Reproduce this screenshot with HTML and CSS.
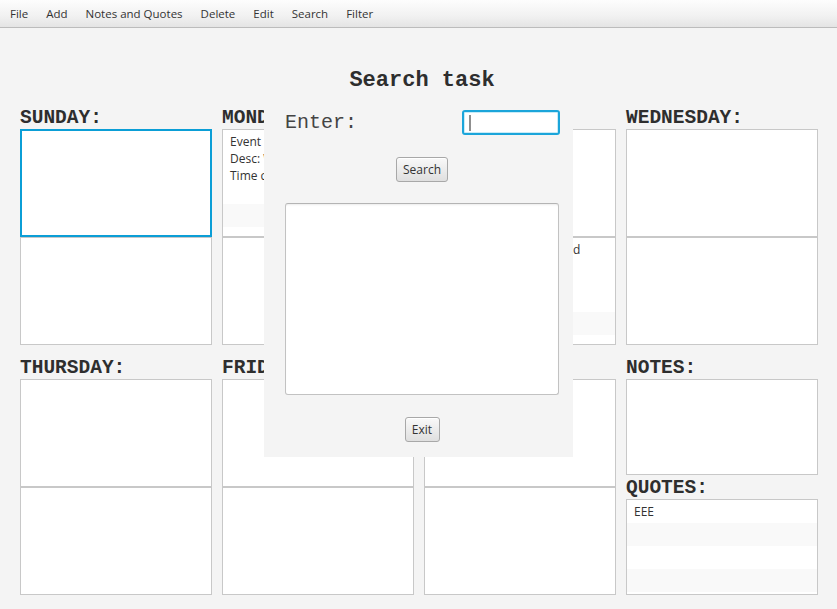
FILE: index.html
```html
<!DOCTYPE html>
<html>
<head>
<meta charset="utf-8">
<title>Planner</title>
<link rel="stylesheet" href="styles.css">
</head>
<body>
<div class="app">
  <nav class="menubar">
    <span class="menu">File</span>
    <span class="menu">Add</span>
    <span class="menu">Notes and Quotes</span>
    <span class="menu">Delete</span>
    <span class="menu">Edit</span>
    <span class="menu">Search</span>
    <span class="menu">Filter</span>
  </nav>

  <main class="board">
    <section class="day">
      <h2 class="day-label">SUNDAY:</h2>
      <div class="list list-top focused"></div>
      <div class="list"></div>
    </section>
    <section class="day">
      <h2 class="day-label">MONDAY:</h2>
      <div class="list list-top">
        <div class="cell cell-event">Event Name: Meeting<br>Desc: Weekly review<br>Time created: 10:00</div>
        <div class="cell odd"></div>
        <div class="cell"></div>
      </div>
      <div class="list"></div>
    </section>
    <section class="day">
      <h2 class="day-label">TUESDAY:</h2>
      <div class="list list-top"></div>
      <div class="list">
        <div class="cell cell-event">Event Name: Football Field<br>Desc: Training<br>Time created: 09:00</div>
        <div class="cell odd"></div>
        <div class="cell"></div>
      </div>
    </section>
    <section class="day">
      <h2 class="day-label">WEDNESDAY:</h2>
      <div class="list list-top"></div>
      <div class="list"></div>
    </section>

    <section class="day">
      <h2 class="day-label">THURSDAY:</h2>
      <div class="list list-top"></div>
      <div class="list"></div>
    </section>
    <section class="day">
      <h2 class="day-label">FRIDAY:</h2>
      <div class="list list-top"></div>
      <div class="list"></div>
    </section>
    <section class="day">
      <h2 class="day-label">SATURDAY:</h2>
      <div class="list list-top"></div>
      <div class="list"></div>
    </section>
    <section class="day side">
      <h2 class="day-label">NOTES:</h2>
      <div class="list note-box"></div>
      <h2 class="day-label quotes-label">QUOTES:</h2>
      <div class="list note-box">
        <div class="cell">EEE</div>
        <div class="cell odd"></div>
        <div class="cell"></div>
        <div class="cell odd"></div>
      </div>
    </section>
  </main>

  <div class="dialog">
    <h1 class="dialog-title">Search task</h1>
    <div class="enter-row">
      <label class="enter-label">Enter:</label>
      <div class="field"><span class="caret"></span></div>
    </div>
    <button class="btn btn-search">Search</button>
    <div class="results"></div>
    <button class="btn btn-exit">Exit</button>
  </div>
</div>
</body>
</html>
```

FILE: styles.css
```css
html, body {
  margin: 0;
  padding: 0;
  background: #f4f4f4;
}

.app {
  position: relative;
  width: 837px;
  height: 609px;
  overflow: hidden;
  font-family: "Open Sans", "Noto Sans", sans-serif;
  font-size: 12px;
  color: #333333;
}

.menubar {
  display: flex;
  align-items: center;
  height: 27px;
  padding-left: 1px;
  background: linear-gradient(to bottom, #fdfdfd 0%, #f1f1f1 60%, #e4e4e4 100%);
  border-bottom: 1px solid #bcbcbc;
  box-sizing: content-box;
}

.menu {
  padding: 0 9px;
  font-size: 11.5px;
  line-height: 27px;
  color: #333333;
}

.board {
  display: grid;
  grid-template-columns: repeat(4, 192px);
  column-gap: 10px;
  row-gap: 13px;
  padding: 80px 0 0 20px;
}

.day {
  display: flex;
  flex-direction: column;
}

.day-label {
  margin: 0 0 1px 0;
  font-family: "Liberation Mono", "Courier New", monospace;
  font-weight: bold;
  font-size: 19.5px;
  line-height: 20px;
  color: #2e2e2e;
  white-space: nowrap;
}

.quotes-label {
  margin-top: 3px;
}

.list {
  box-sizing: border-box;
  height: 108px;
  background: #ffffff;
  border: 1px solid #c8c8c8;
  overflow: hidden;
}

.list.focused {
  border: 2px solid #0b9ed6;
}

.note-box {
  height: 96px;
}

.cell {
  box-sizing: border-box;
  height: 23px;
  padding: 3px 7px;
  line-height: 17px;
  white-space: nowrap;
  overflow: hidden;
}

.cell.odd {
  background: #f9f9f9;
}

.cell-event {
  height: 74px;
}

.dialog {
  position: absolute;
  left: 264px;
  top: 40px;
  width: 309px;
  box-sizing: border-box;
  padding: 28px 14px 15px 21px;
  background: #f4f4f4;
  display: flex;
  flex-direction: column;
  align-items: center;
}

.dialog-title {
  margin: 0;
  font-family: "Liberation Mono", "Courier New", monospace;
  font-weight: bold;
  font-size: 22px;
  line-height: 26px;
  color: #2e2e2e;
}

.enter-row {
  align-self: stretch;
  display: flex;
  align-items: center;
  justify-content: space-between;
  margin-top: 16px;
  height: 25px;
}

.enter-label {
  font-family: "Liberation Mono", "Courier New", monospace;
  font-size: 20px;
  line-height: 20px;
  color: #444444;
}

.field {
  box-sizing: border-box;
  width: 98px;
  height: 25px;
  margin-right: -1px;
  border: 2px solid #1ba5da;
  border-radius: 3px;
  background: #ffffff;
  box-shadow: inset 0 0 0 1px #c9ebf7;
  display: flex;
  align-items: center;
  padding-left: 5px;
}

.caret {
  width: 2px;
  height: 16px;
  background: #8f8f8f;
}

.btn {
  box-sizing: border-box;
  height: 25px;
  padding: 0;
  font-family: "Open Sans", "Noto Sans", sans-serif;
  font-size: 12px;
  color: #333333;
  background: linear-gradient(to bottom, #f9f9f9 0%, #ececec 50%, #dfdfdf 100%);
  border: 1px solid #a8a8a8;
  border-radius: 3px;
  box-shadow: inset 0 1px 0 #ffffff;
}

.btn-search {
  width: 52px;
  margin-top: 22px;
}

.btn-exit {
  width: 35px;
  margin-top: 22px;
}

.results {
  align-self: stretch;
  box-sizing: border-box;
  height: 192px;
  margin-top: 21px;
  background: #ffffff;
  border: 1px solid #c2c2c2;
  border-top-color: #b4b4b4;
  border-radius: 3px;
  box-shadow: inset 0 2px 2px -1px rgba(0, 0, 0, 0.08);
}
```
